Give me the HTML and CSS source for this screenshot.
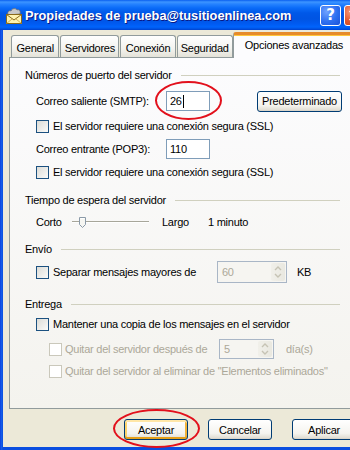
FILE: index.html
```html
<!DOCTYPE html>
<html lang="es">
<head>
<meta charset="utf-8">
<title>Propiedades de prueba@tusitioenlinea.com</title>
<link rel="stylesheet" href="styles.css">
</head>
<body>
<div class="window">
  <div class="titlebar">
    <svg class="app-icon" viewBox="0 0 18 18" width="18" height="18">
      <path d="M3 8 C2 5 4 3 6 4 C7 1 11 1 12 3 C14 2 16 4 15 7 Z" fill="#c9c9c9" stroke="#6f6f6f" stroke-width="0.8"/>
      <rect x="1.5" y="7.5" width="15" height="9" fill="#fff3b0" stroke="#8a6a1a" stroke-width="1"/>
      <path d="M1.5 7.5 L9 13 L16.5 7.5" fill="none" stroke="#8a6a1a" stroke-width="1"/>
      <path d="M1.5 16.5 L7 12 M16.5 16.5 L11 12" fill="none" stroke="#c8a040" stroke-width="0.8"/>
    </svg>
    <span class="title">Propiedades de prueba@tusitioenlinea.com</span>
    <div class="caption-btns">
      <span class="cbtn help">?</span>
      <span class="cbtn close">
        <svg viewBox="0 0 21 21" width="21" height="21"><path d="M6 6 L15 15 M15 6 L6 15" stroke="#fff" stroke-width="2.2" stroke-linecap="square"/></svg>
      </span>
    </div>
  </div>

  <div class="client">
    <div class="tabs">
      <span class="tab t-general">General</span>
      <span class="tab t-serv">Servidores</span>
      <span class="tab t-con">Conexión</span>
      <span class="tab t-seg">Seguridad</span>
      <span class="tab active t-opc">Opciones avanzadas</span>
    </div>

    <div class="panel">
      <div class="gh">Números de puerto del servidor</div>

      <div class="row tall ind mt8">
        <span class="lbl">Correo saliente (SMTP):</span>
        <span class="tb">26<span class="caret"></span></span>
        <span class="btn btn-pred">Predeterminado</span>
      </div>

      <div class="row ind mt7">
        <span class="cb"></span><span>El servidor requiere una conexión segura (SSL)</span>
      </div>

      <div class="row tall ind mt5">
        <span class="lbl">Correo entrante (POP3):</span>
        <span class="tb">110</span>
      </div>

      <div class="row ind mt5">
        <span class="cb"></span><span>El servidor requiere una conexión segura (SSL)</span>
      </div>

      <div class="gh mt14">Tiempo de espera del servidor</div>

      <div class="row slider-row ind mt7">
        <span class="lbl-corto">Corto</span>
        <svg class="slider" viewBox="0 0 78 16" width="78" height="16">
          <line x1="0" y1="7.5" x2="77" y2="7.5" stroke="#a7a69a" stroke-width="1"/>
          <line x1="0" y1="8.5" x2="77" y2="8.5" stroke="#ffffff" stroke-width="1"/>
          <path d="M7.5 3.5 H13.5 V10.5 L10.5 13.5 L7.5 10.5 Z" fill="#f6f6f2" stroke="#8b9aa8" stroke-width="1"/>
          <line x1="8.5" y1="4.5" x2="12.5" y2="4.5" stroke="#ffffff"/>
        </svg>
        <span class="lbl-largo">Largo</span>
        <span>1 minuto</span>
      </div>

      <div class="gh mt12">Envío</div>

      <div class="row tall ind mt5">
        <span class="cb"></span><span class="lbl-sep">Separar mensajes mayores de</span>
        <span class="spin spin-60"><span class="spin-val">60</span><span class="spin-btns"><svg viewBox="0 0 14 18" width="14" height="18"><path d="M4 7 L7 4 L10 7" fill="none" stroke="#c6c3b4" stroke-width="1.4"/><path d="M4 11 L7 14 L10 11" fill="none" stroke="#c6c3b4" stroke-width="1.4"/></svg></span></span>
        <span class="unit-kb">KB</span>
      </div>

      <div class="gh mt14">Entrega</div>

      <div class="row ind mt6">
        <span class="cb"></span><span>Mantener una copia de los mensajes en el servidor</span>
      </div>

      <div class="row tall ind2 mt7 disabled">
        <span class="cb cb-dis"></span><span class="lbl-quitar">Quitar del servidor después de</span>
        <span class="spin spin-5"><span class="spin-val">5</span><span class="spin-btns"><svg viewBox="0 0 14 16" width="14" height="16"><path d="M4 6 L7 3 L10 6" fill="none" stroke="#c6c3b4" stroke-width="1.4"/><path d="M4 10 L7 13 L10 10" fill="none" stroke="#c6c3b4" stroke-width="1.4"/></svg></span></span>
        <span class="unit-dias">día(s)</span>
      </div>

      <div class="row ind2 mt4 disabled">
        <span class="cb cb-dis"></span><span>Quitar del servidor al eliminar de "Elementos eliminados"</span>
      </div>
    </div>

    <div class="actions">
      <span class="btn btn-act btn-default">Aceptar</span>
      <span class="btn btn-act">Cancelar</span>
      <span class="btn btn-act">Aplicar</span>
    </div>
  </div>

  <div class="ring ring-smtp"></div>
  <div class="ring ring-ok"></div>
</div>
</body>
</html>
```

FILE: styles.css
```css
html, body {
  margin: 0;
  padding: 0;
}

body {
  width: 350px;
  height: 450px;
  overflow: hidden;
  background: #ece9d8;
  font-family: "Liberation Sans", Arial, sans-serif;
  font-size: 11px;
  letter-spacing: -0.25px;
  color: #000;
}

.window {
  position: relative;
  width: 367px;
  height: 450px;
  background: linear-gradient(90deg, #0831d9 0, #1660ea 1px, #0a4ee0 3px);
  display: flex;
  flex-direction: column;
}

/* ---------- title bar ---------- */
.titlebar {
  height: 30px;
  flex: none;
  display: flex;
  align-items: center;
  padding-left: 5px;
  background: linear-gradient(#0a5fef 0, #3d95ff 2px, #2683ff 4px, #0a6bf8 8px, #0058e8 13px, #0054e3 19px, #005bf2 24px, #0064fc 27px, #0050e0 29px, #0040cc 30px);
}

.app-icon {
  width: 18px;
  height: 18px;
  margin-right: 2px;
  margin-top: 1px;
}

.title {
  color: #fff;
  font-weight: bold;
  font-size: 12.8px;
  letter-spacing: 0;
  text-shadow: 1px 1px 0 #0a1883;
  white-space: nowrap;
}

.caption-btns {
  margin-left: auto;
  display: flex;
  gap: 3px;
  padding-right: 2px;
}

.cbtn {
  width: 21px;
  height: 21px;
  box-sizing: border-box;
  border: 1px solid #fff;
  border-radius: 3px;
  display: flex;
  align-items: center;
  justify-content: center;
}

.help {
  background: radial-gradient(circle at 30% 30%, #6fa2ff 0, #2e6ff0 55%, #1a52d8 100%);
  color: #fff;
  font-weight: bold;
  font-size: 15px;
  letter-spacing: 0;
  font-family: "DejaVu Sans", sans-serif;
}

.close {
  background: radial-gradient(circle at 30% 30%, #f39a7a 0, #e2582e 50%, #c8401a 100%);
}

.close svg {
  display: block;
}

/* ---------- client area ---------- */
.client {
  flex: 1;
  margin: 0 4px 3px 3px;
  padding: 2px 7px 0 6px;
  background: #ece9d8;
  display: flex;
  flex-direction: column;
}

.tabs {
  display: flex;
  align-items: flex-end;
  height: 25px;
  margin-left: 2px;
}

.tab {
  box-sizing: border-box;
  height: 22px;
  margin-right: 1px;
  border: 1px solid #919b9c;
  border-bottom: none;
  border-radius: 3px 3px 0 0;
  background: linear-gradient(#ffffff, #f3f3ef 60%, #e4e2d8);
  display: flex;
  align-items: center;
  justify-content: center;
  padding-top: 2px;
  white-space: nowrap;
}

.t-general { width: 49px; }
.t-serv { width: 60px; }
.t-con { width: 56px; }
.t-seg { width: 57px; margin-right: 0; }

.tab.active {
  position: relative;
  z-index: 1;
  width: 124px;
  height: 26px;
  margin-bottom: -1px;
  background: #fcfcfe;
  border-top: 3px solid #e68b2c;
  box-shadow: inset 0 1px 0 #ffc73c;
  padding-top: 0;
  padding-bottom: 3px;
}

.panel {
  height: 352px;
  box-sizing: border-box;
  border: 1px solid #919b9c;
  background: linear-gradient(#fcfcfe, #f4f3ee);
  padding: 10px 15px 0 15px;
}

/* group header */
.gh {
  display: flex;
  align-items: center;
  height: 14px;
  white-space: nowrap;
}

.gh::after {
  content: "";
  flex: 1;
  height: 1px;
  background: #d0d0bf;
  margin-left: 9px;
}

.row {
  display: flex;
  align-items: center;
  height: 14px;
  white-space: nowrap;
}

.row.tall { height: 22px; }
.slider-row { height: 16px; }

.ind { padding-left: 11px; }
.ind2 { padding-left: 24px; }

.mt4 { margin-top: 4px; }
.mt5 { margin-top: 5px; }
.mt6 { margin-top: 6px; }
.mt7 { margin-top: 7px; }
.mt8 { margin-top: 8px; }
.mt12 { margin-top: 12px; }
.mt14 { margin-top: 14px; }

.lbl {
  width: 130px;
  flex: none;
}

.tb {
  box-sizing: border-box;
  width: 44px;
  height: 20px;
  border: 1px solid #7f9db9;
  background: #fff;
  padding-left: 3px;
  display: flex;
  align-items: center;
  flex: none;
}

.caret {
  display: inline-block;
  width: 1px;
  height: 13px;
  background: #000;
  margin-left: 1px;
}

.btn {
  box-sizing: border-box;
  height: 21px;
  border: 1px solid #003c74;
  border-radius: 3px;
  background: linear-gradient(#ffffff, #f5f4ef 70%, #e3e0d6 92%, #d6d0c5);
  display: flex;
  align-items: center;
  justify-content: center;
  flex: none;
}

.btn-pred {
  width: 85px;
  margin-left: 47px;
}

/* checkbox */
.cb {
  box-sizing: border-box;
  width: 13px;
  height: 13px;
  border: 1px solid #1c5180;
  background: linear-gradient(135deg, #dcdcd7, #fbfbf9);
  margin-right: 4px;
  flex: none;
}

.cb.cb-dis {
  border-color: #cac8bb;
  background: #fff;
  margin-right: 3px;
}

.disabled {
  color: #aca899;
}

/* slider */
.lbl-corto {
  width: 36px;
  flex: none;
}

.slider {
  display: block;
  flex: none;
}

.lbl-largo {
  width: 46px;
  margin-left: 12px;
  flex: none;
}

/* spin boxes */
.lbl-sep {
  width: 164px;
  flex: none;
}

.spin {
  box-sizing: border-box;
  height: 22px;
  border: 1px solid #a9b6c6;
  background: #f6f5f1;
  display: flex;
  align-items: center;
  color: #aca899;
  flex: none;
  padding: 1px;
}

.spin-60 { width: 70px; }
.spin-5 { width: 55px; height: 20px; }

.spin-val {
  flex: 1;
  padding-left: 3px;
}

.spin-btns {
  width: 14px;
  align-self: stretch;
  border-radius: 2px;
  background: linear-gradient(90deg, #f1f0ea, #e9e8e0);
  display: flex;
  align-items: center;
  justify-content: center;
}

.spin-btns svg {
  display: block;
}

.unit-kb {
  margin-left: 10px;
}

.lbl-quitar {
  width: 154px;
  flex: none;
}

.unit-dias {
  margin-left: 12px;
}

/* bottom buttons */
.actions {
  display: flex;
  justify-content: flex-end;
  gap: 20px;
  margin-top: 10px;
}

.btn-act {
  width: 64px;
}

.btn-default {
  box-shadow: inset 0 2px 0 #ffe7a8, inset 0 -2px 0 #e5a01a, inset 2px 0 0 #fbd36c, inset -2px 0 0 #f2b43a;
}

/* red annotation rings */
.ring {
  position: absolute;
  box-sizing: border-box;
  border: 2px solid #e2101c;
  border-radius: 50%;
  pointer-events: none;
}

.ring-smtp {
  left: 155px;
  top: 81px;
  width: 67px;
  height: 39px;
}

.ring-ok {
  left: 113px;
  top: 409px;
  width: 87px;
  height: 39px;
}
```
